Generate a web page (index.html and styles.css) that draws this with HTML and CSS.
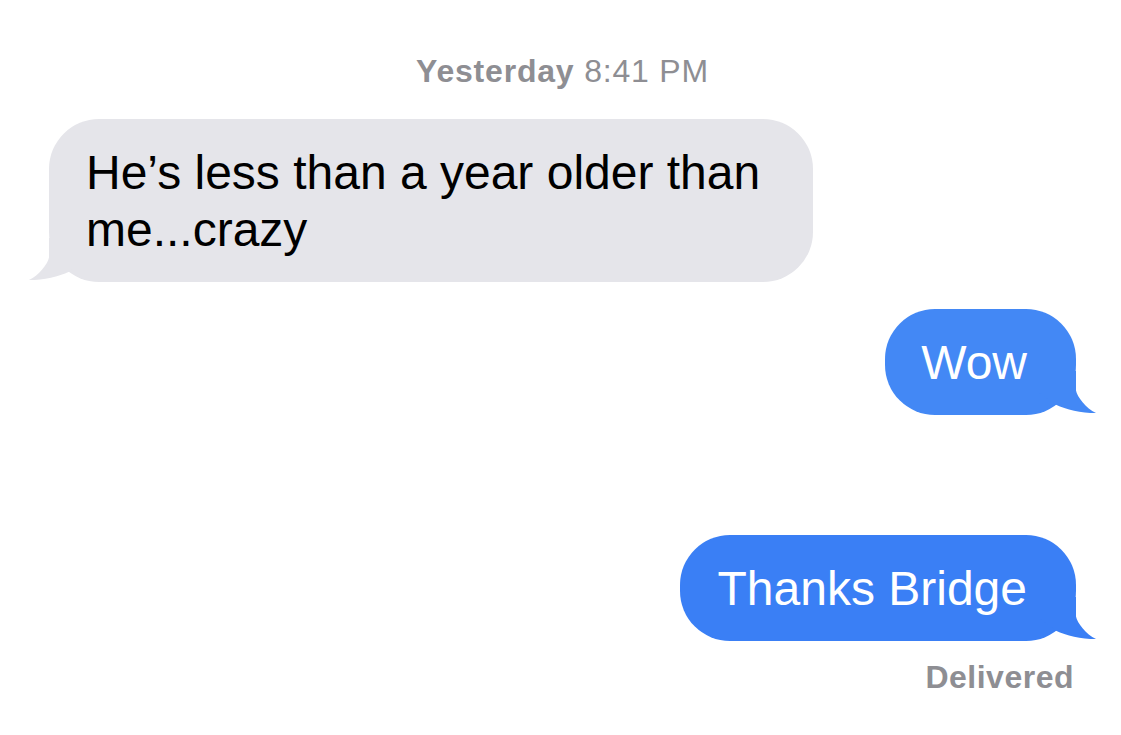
FILE: index.html
```html
<!DOCTYPE html>
<html lang="en">
<head>
<meta charset="utf-8">
<title>Messages</title>
<link rel="stylesheet" href="styles.css">
</head>
<body>
<main class="thread">
  <div class="timestamp"><span class="day">Yesterday</span> 8:41 PM</div>

  <div class="row row-in">
    <div class="bubble bubble-in">He’s less than a year older than me...crazy<svg class="tail tail-in" width="60" height="44" viewBox="0 0 60 44" aria-hidden="true"><path d="M21 0 L21 19.5 C20 25.5 11 37.5 1 42 C16 42 31 38.5 41 33.7 L60 20 L60 0 Z"/></svg></div>
  </div>

  <div class="row row-out row-first">
    <div class="bubble bubble-out bubble-wow">Wow<svg class="tail tail-out" width="60" height="44" viewBox="0 0 60 44" aria-hidden="true"><path d="M39 0 L39 19.5 C40 25.5 49 37.5 59 42 C44 42 29 38.5 19 33.7 L0 20 L0 0 Z"/></svg></div>
  </div>

  <div class="row row-out row-later">
    <div class="bubble bubble-out bubble-thanks">Thanks Bridge<svg class="tail tail-out" width="60" height="44" viewBox="0 0 60 44" aria-hidden="true"><path d="M39 0 L39 19.5 C40 25.5 49 37.5 59 42 C44 42 29 38.5 19 33.7 L0 20 L0 0 Z"/></svg></div>
  </div>

  <div class="status">Delivered</div>
</main>
</body>
</html>
```

FILE: styles.css
```css
html, body {
  margin: 0;
  padding: 0;
  background: #ffffff;
}

body {
  font-family: "Liberation Sans", Arial, sans-serif;
  width: 1121px;
  height: 735px;
  overflow: hidden;
}

.thread {
  display: flex;
  flex-direction: column;
  padding-top: 52px;
}

.timestamp {
  text-align: center;
  font-size: 32px;
  line-height: 38px;
  letter-spacing: 0.8px;
  color: #8e8e93;
  padding-left: 4px;
}

.timestamp .day {
  font-weight: 700;
}

.row {
  display: flex;
}

.row-in {
  justify-content: flex-start;
  padding-left: 49px;
  margin-top: 29px;
}

.row-out {
  justify-content: flex-end;
  padding-right: 45px;
}

.row-first {
  margin-top: 27px;
}

.row-later {
  margin-top: 120px;
}

.bubble {
  position: relative;
  font-size: 48px;
  line-height: 57px;
  padding-top: 25px;
  padding-bottom: 24px;
  border-radius: 50px;
}

.bubble-in {
  background: #e5e5ea;
  color: #000000;
  padding-left: 37px;
  padding-right: 50px;
  max-width: 677px;
}

.bubble-out {
  color: #ffffff;
  padding-left: 38px;
  padding-right: 49px;
}

.bubble-wow {
  background: #4388f5;
  padding-left: 36px;
}

.bubble-thanks {
  background: #3a7ff5;
}

.tail {
  position: absolute;
  bottom: 0;
  display: block;
}

.tail-in {
  left: -21px;
  fill: #e5e5ea;
}

.tail-out {
  right: -21px;
}

.bubble-wow .tail-out {
  fill: #4388f5;
}

.bubble-thanks .tail-out {
  fill: #3a7ff5;
}

.status {
  align-self: flex-end;
  margin-top: 17px;
  margin-right: 47px;
  font-size: 32px;
  line-height: 38px;
  font-weight: 700;
  letter-spacing: 0.5px;
  color: #8e8e93;
}
```
